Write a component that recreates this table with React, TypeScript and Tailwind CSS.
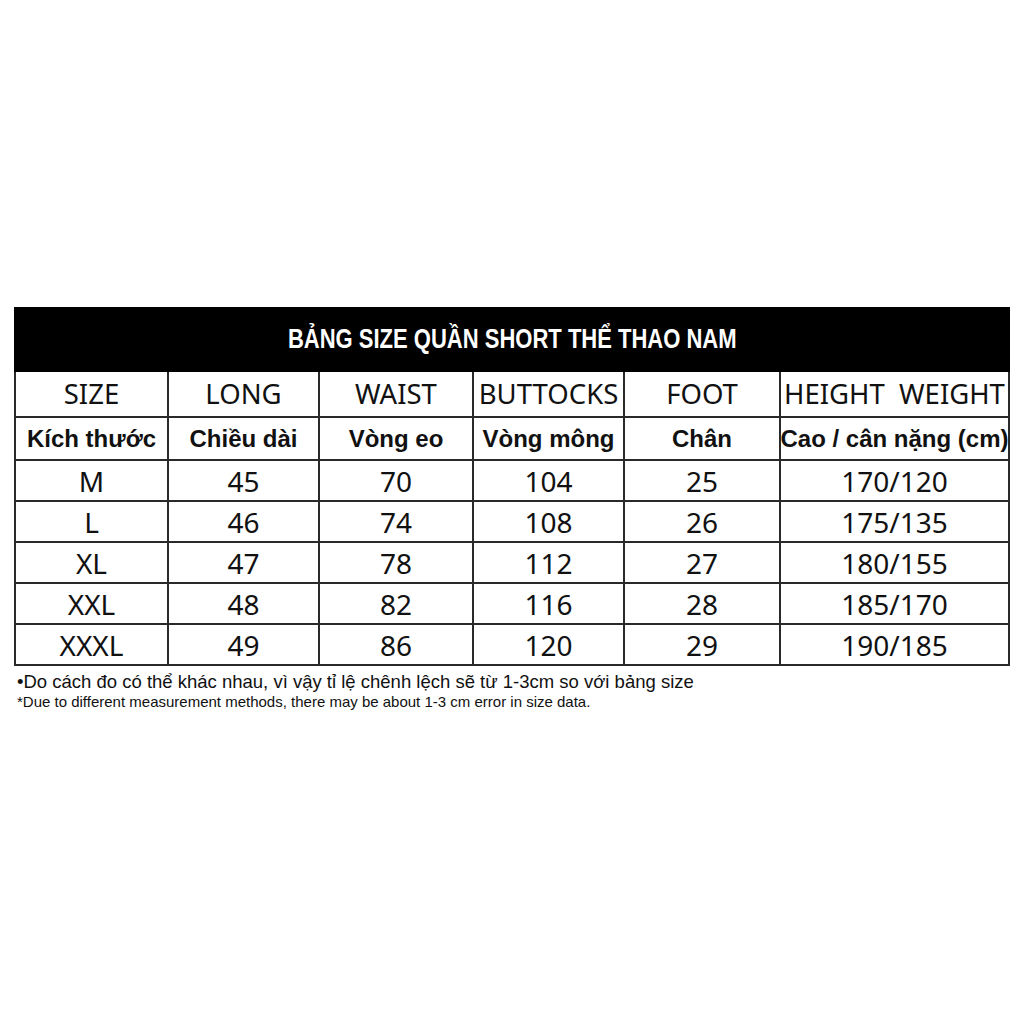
const cols = "grid-cols-[151px_149px_152px_149px_154px_227px]"

const enHead = ["SIZE", "LONG", "WAIST", "BUTTOCKS", "FOOT", "HEIGHT  WEIGHT"]
const viHead = ["Kích thước", "Chiều dài", "Vòng eo", "Vòng mông", "Chân", "Cao / cân nặng (cm)"]
const rows = [
  ["M", "45", "70", "104", "25", "170/120"],
  ["L", "46", "74", "108", "26", "175/135"],
  ["XL", "47", "78", "112", "27", "180/155"],
  ["XXL", "48", "82", "116", "28", "185/170"],
  ["XXXL", "49", "86", "120", "29", "190/185"],
]

export default function App() {
  return (
    <div className="w-[1024px] h-[1024px] bg-white pt-[307px] pl-[14px]">
      <div className="w-[996px]">
        <div className="h-[65px] bg-black flex items-center justify-center">
          <span className="inline-block scale-x-[0.815] text-white font-bold text-[27px] font-['Liberation_Sans',Arial,sans-serif] whitespace-nowrap">
            BẢNG SIZE QUẦN SHORT THỂ THAO NAM
          </span>
        </div>
        <div className={`grid ${cols} gap-[2px] bg-[#2a2a2a] px-[2px] pb-[2px]`}>
          {enHead.map((h) => (
            <div key={h} className="bg-white h-[44px] flex items-center justify-center text-[27.5px] text-[#111] font-['Noto_Sans',sans-serif] whitespace-pre">
              {h}
            </div>
          ))}
          {viHead.map((h) => (
            <div key={h} className="bg-white h-[41px] flex items-center justify-center text-[24px] font-bold text-[#111] font-['Liberation_Sans',Arial,sans-serif] whitespace-nowrap">
              {h}
            </div>
          ))}
          {rows.map((r) =>
            r.map((c, i) => (
              <div key={r[0] + i} className="bg-white h-[39px] flex items-center justify-center text-[28px] text-[#111] font-['Noto_Sans',sans-serif]">
                {c}
              </div>
            ))
          )}
        </div>
        <div className="pl-[3px] pt-[5px] text-[#111]">
          <p className="text-[18.5px] leading-[21px] font-['Liberation_Sans',Arial,sans-serif] whitespace-nowrap">
            •Do cách đo có thể khác nhau, vì vậy tỉ lệ chênh lệch sẽ từ 1-3cm so với bảng size
          </p>
          <p className="text-[15px] leading-[19px] font-['Liberation_Sans',Arial,sans-serif] whitespace-nowrap">
            *Due to different measurement methods, there may be about 1-3 cm error in size data.
          </p>
        </div>
      </div>
    </div>
  )
}
